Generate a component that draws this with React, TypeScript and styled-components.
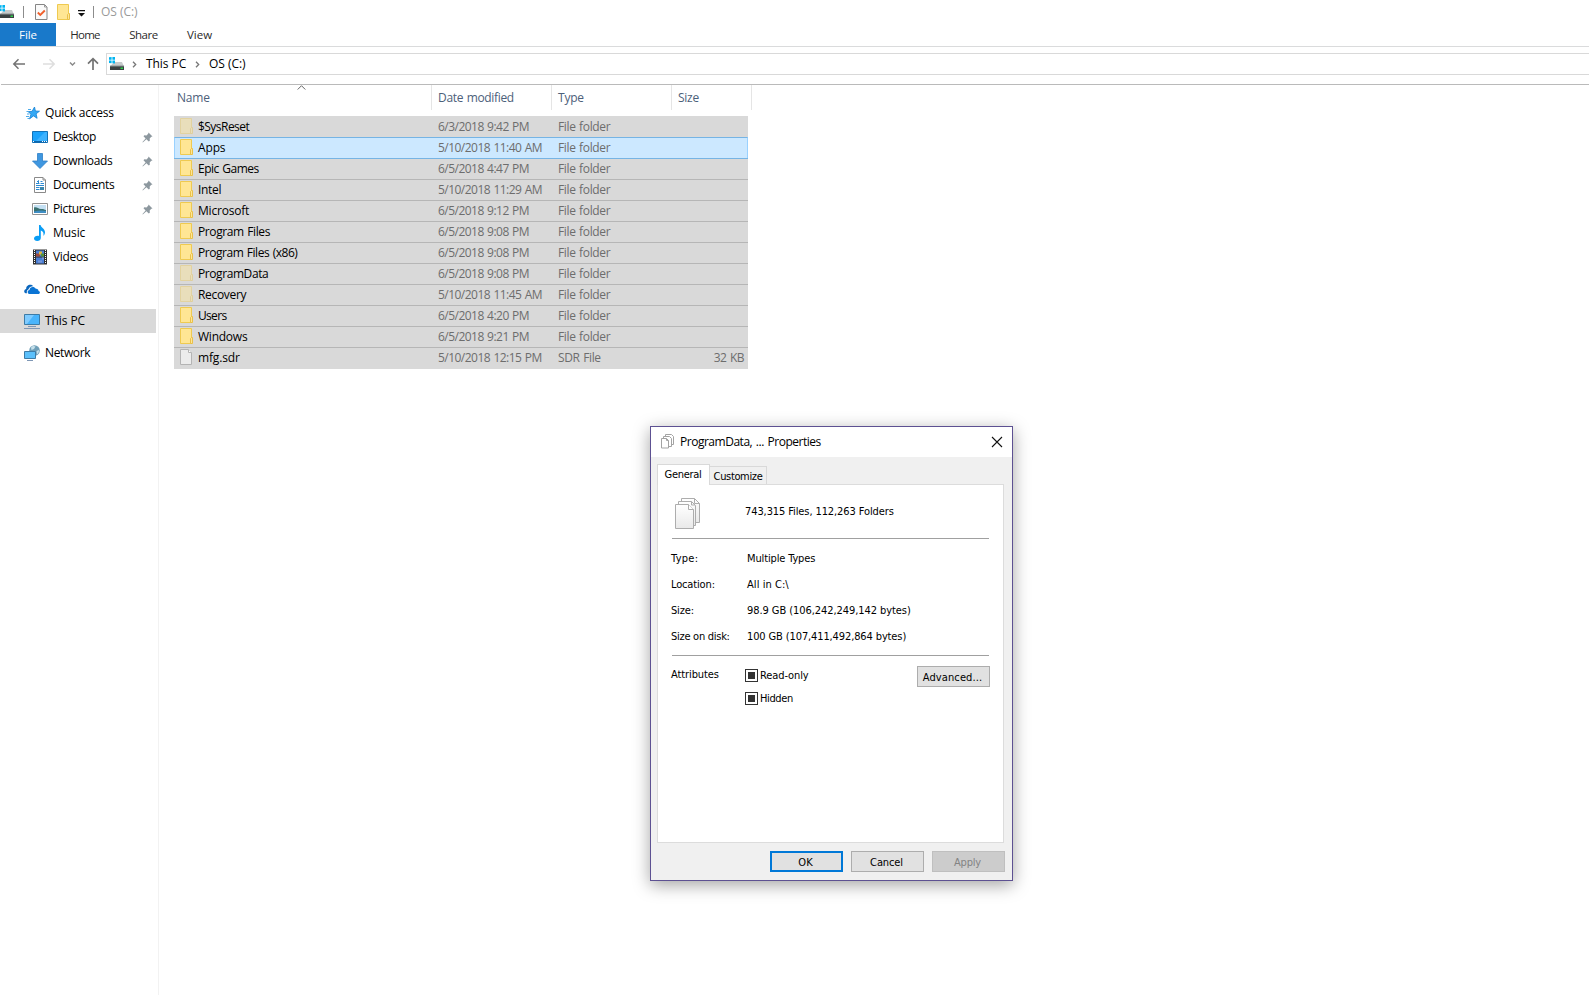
import React from 'react';
import styled, { createGlobalStyle, css } from 'styled-components';

const GlobalStyle = createGlobalStyle`
  * { box-sizing: border-box; }
  body {
    margin: 0;
    background: #fff;
    color: #000;
    font-family: "Open Sans", "Noto Sans", sans-serif;
    font-size: 12px;
    line-height: 16px;
    overflow: hidden;
  }
  svg { display: block; flex: none; }
`;

/* ---------- shared ---------- */

const Label = styled.span<{ $track?: number; $word?: number }>`
  white-space: nowrap;
  letter-spacing: ${(p) => p.$track ?? 0}px;
  word-spacing: ${(p) => p.$word ?? 0}px;
`;

const Window = styled.div`
  width: 1589px;
  height: 995px;
  display: flex;
  flex-direction: column;
  overflow: hidden;
  background: #fff;
`;

/* ---------- title bar and ribbon ---------- */

const TitleBar = styled.header`
  height: 23px;
  display: flex;
  align-items: center;
  color: #999;
`;

const Divider = styled.i`
  width: 1px;
  height: 12px;
  background: #8c8c8c;
`;

const QuickIcons = styled.div`
  display: flex;
  align-items: center;
  width: 101px;
  height: 23px;
  & > ${Divider}:nth-of-type(1) { margin: 0 11px 0 8px; }
  & > ${Divider}:nth-of-type(2) { margin: 0 0 0 8px; }
  & > svg:nth-of-type(3) { margin-left: 9px; }
  & > svg:nth-of-type(4) { margin: 4px 0 0 8px; }
`;

const RibbonTabs = styled.nav`
  height: 24px;
  display: flex;
  border-bottom: 1px solid #dadbdc;
  font-size: 11.5px;
  color: #2b2b2b;
`;

const RibbonTab = styled.div<{ $width: number; $active?: boolean }>`
  width: ${(p) => p.$width}px;
  height: 23px;
  display: flex;
  align-items: center;
  justify-content: center;
  padding-top: 1px;
  ${(p) => p.$active && css`background: #1979ca; color: #fff;`}
`;

const NavBar = styled.div`
  height: 37px;
  display: flex;
  align-items: flex-start;
  padding-top: 6px;
`;

const NavArrows = styled.div`
  width: 106px;
  height: 22px;
  flex: none;
`;

const AddressBox = styled.div`
  flex: 1;
  height: 22px;
  display: flex;
  align-items: center;
  border: 1px solid #d9d9d9;
  border-right: 0;
  padding: 0 0 0 2px;
`;

const Crumb = styled.div<{ $width: number; $indent?: number }>`
  width: ${(p) => p.$width}px;
  padding-left: ${(p) => p.$indent ?? 0}px;
  display: flex;
`;

/* ---------- body ---------- */

const Body = styled.div`
  flex: 1;
  display: flex;
  margin-left: 1px;
  border-top: 1px solid #bababa;
`;

const Sidebar = styled.aside`
  width: 159px;
  flex: none;
  padding-top: 16px;
  margin-left: -1px;
  border-right: 1px solid #f2f2f2;
`;

const SideItem = styled.div<{ $nested?: boolean; $gap?: boolean; $selected?: boolean }>`
  width: 156px;
  height: 24px;
  display: flex;
  align-items: center;
  padding: 0 3px 0 ${(p) => (p.$nested ? 32 : 24)}px;
  margin-top: ${(p) => (p.$gap ? 8 : 0)}px;
  background: ${(p) => (p.$selected ? '#d9d9d9' : 'transparent')};
`;

const SideText = styled(Label)`
  margin-left: 5px;
  flex: 1;
`;

const Listing = styled.main`
  padding-left: 15px;
`;

const HeaderRow = styled.div`
  display: grid;
  grid-template-columns: 258px 120px 120px 80px;
  height: 25px;
  color: #4c607a;
`;

const HeaderCell = styled.div<{ $first?: boolean }>`
  position: relative;
  display: flex;
  align-items: center;
  padding-left: ${(p) => (p.$first ? 3 : 6)}px;
  border-right: 1px solid #e5e5e5;
`;

const SortMark = styled.svg`
  position: absolute;
  left: 123px;
  top: 0;
`;

const Rows = styled.div`
  width: 574px;
  margin-top: 6px;
`;

const Row = styled.div<{ $mode: 'first' | 'plain' | 'hot' | 'afterHot' | 'last' }>`
  display: grid;
  grid-template-columns: 257px 120px 120px 75px;
  align-items: center;
  height: 21px;
  padding-left: 1px;
  background: #d9d9d9;
  color: #6d6d6d;
  border-top: 1px solid #b6b6b6;
  ${(p) => p.$mode === 'first' && css`border-top-color: #d9d9d9;`}
  ${(p) => p.$mode === 'last' && css`height: 22px; padding-bottom: 1px;`}
  ${(p) => p.$mode === 'afterHot' && css`border-top-color: #76b4e4;`}
  ${(p) => p.$mode === 'hot' && css`
    background: #cce8ff;
    border: 1px solid #76b4e4;
    border-bottom: 0;
    border-left-color: #99d1ff;
    border-right-color: #99d1ff;
    padding-left: 0;
  `}
`;

const NameCell = styled.div`
  display: flex;
  align-items: center;
  gap: 5px;
  padding-left: 5px;
  color: #000;
  & > svg { margin-bottom: 2px; }
`;

const Cell = styled.div<{ $end?: boolean }>`
  padding-left: 6px;
  ${(p) => p.$end && css`text-align: right; padding: 0 3px 0 0;`}
`;

/* ---------- properties dialog ---------- */

const Dialog = styled.section`
  position: absolute;
  left: 650px;
  top: 426px;
  width: 363px;
  height: 455px;
  display: flex;
  flex-direction: column;
  background: #f0f0f0;
  border: 1px solid #5d5192;
  box-shadow: 0 4px 16px rgba(0, 0, 0, 0.36);
  font-family: "DejaVu Sans Condensed", "DejaVu Sans", sans-serif;
  font-size: 11px;
`;

const DialogTitle = styled.header`
  height: 30px;
  display: flex;
  align-items: center;
  background: #fff;
  padding: 0 9px 0 10px;
  font-family: "Open Sans", "Noto Sans", sans-serif;
  font-size: 12px;
  & > span { flex: 1; margin-left: 6px; }
  & > svg { margin-bottom: 1px; }
`;

const TabStrip = styled.div`
  display: flex;
  align-items: flex-end;
  height: 27px;
  padding: 0 6px;
`;

const Tab = styled.div<{ $active?: boolean }>`
  display: flex;
  align-items: center;
  justify-content: center;
  border: 1px solid #d9d9d9;
  border-bottom: 0;
  ${(p) => p.$active
    ? css`width: 53px; height: 21px; background: #fff; margin-bottom: -1px; z-index: 1; padding: 0 1px 0 0;`
    : css`width: 57px; height: 18px; background: #f0f0f0; border-left: 0; padding-top: 2px;`}
`;

const Page = styled.div`
  width: 347px;
  height: 359px;
  margin-left: 6px;
  padding: 12px 13px 0 14px;
  background: #fff;
  border: 1px solid #dcdcdc;
`;

const Summary = styled.div`
  height: 41px;
  display: flex;
  & > span { margin: 7px 0 0 43px; }
`;

const Rule = styled.hr`
  margin: 0;
  width: 317px;
  border: 0;
  height: 1px;
  background: #a0a0a0;
`;

const Fields = styled.dl`
  margin: 7px 0 7px;
  display: grid;
  grid-template-columns: 76px 1fr;
  grid-auto-rows: 26px;
  align-items: center;
  height: 102px;
  & > dt, & > dd { margin: 0 0 0 -1px; }
`;

const Attributes = styled.div`
  display: grid;
  grid-template-columns: 73px 1fr 73px;
  padding-top: 10px;
  width: 318px;
`;

const AttributesName = styled.div`
  margin: 1px 0 0 -1px;
`;

const Checks = styled.div`
  display: flex;
  flex-direction: column;
  gap: 10px;
  padding-top: 3px;
`;

const Check = styled.label`
  display: flex;
  align-items: center;
  gap: 2px;
  height: 13px;
`;

const Box = styled.i`
  width: 13px;
  height: 13px;
  border: 1px solid #333;
  padding: 2px;
  background: #333;
  background-clip: content-box;
`;

const Button = styled.button<{ $kind?: 'default' | 'disabled' }>`
  width: 73px;
  height: 21px;
  padding: 2px 2px 0 0;
  display: flex;
  align-items: center;
  justify-content: center;
  font: inherit;
  line-height: 15px;
  color: #000;
  background: #e1e1e1;
  border: 1px solid #adadad;
  ${(p) => p.$kind === 'default' && css`border: 2px solid #0078d7;`}
  ${(p) => p.$kind === 'disabled' && css`background: #ccc; border-color: #bfbfbf; color: #838383;`}
`;

const Actions = styled.footer`
  display: flex;
  justify-content: flex-end;
  gap: 8px;
  padding: 8px 7px 0 0;
`;

/* ---------- icons ---------- */

const DriveIcon = ({ shift = 0 }: { shift?: number }) => (
  <svg width={16 - shift} height="16" viewBox={`${shift} 0 ${16 - shift} 16`}>
    <path d="M5 6h8l2 4.500H1z" fill="#c6cacb" />
    <path d="M0 1.300l2.600-.3v2.700H0zM3.400 1H6v2.700H3.400zM0 4.500h2.600v2.700L0 7zM3.400 4.500H6v3l-2.600-.3z" fill="#00b4f1" />
    <path d="M1 10h14v4H1z" fill="#3b4042" />
    <path d="M1 9.500h14v1H1z" fill="#899093" />
    <path d="M11.500 11.500H14v1.500h-2.500z" fill="#2fd04a" />
  </svg>
);

const CheckPageIcon = () => (
  <svg width="13" height="16" viewBox="0 0 13 16">
    <path d="M.5.500h9l2.500 2.500v12.500H.500z" fill="#fafafa" stroke="#858585" />
    <path d="M9.500.500V3H12" fill="none" stroke="#999" />
    <path d="M2.800 8.500l2.500 2.500 4.500-4.500" fill="none" stroke="#f0602c" strokeWidth="1.900" />
  </svg>
);

const FolderIcon = ({ faded }: { faded?: boolean }) => (
  <svg width="13" height="16" viewBox="0 0 13 16" opacity={faded ? 0.42 : 1}>
    <path d="M.5.500h11v15H.500z" fill="#ffe694" stroke="#efca50" />
    <path d="M10.500 15.500v-5l1-1h1v6z" fill="#ffe694" stroke="#e9c04a" />
  </svg>
);

const FileIcon = () => (
  <svg width="13" height="16" viewBox="0 0 13 16">
    <path d="M.5.500h8l3 3v12H.500z" fill="#ececec" stroke="#b4b4b4" />
    <path d="M8.500.500v3h3" fill="#fff" stroke="#b4b4b4" />
  </svg>
);

const MenuMark = () => (
  <svg width="7" height="8" viewBox="0 0 7 8">
    <path d="M0 0h7v1.300H0zM0 3h7L3.500 6.500z" fill="#111" />
  </svg>
);

const Chevron = () => (
  <svg width="5" height="7" viewBox="0 0 5 7">
    <path d="M1 .7l2.700 2.800L1 6.300" fill="none" stroke="#777" strokeWidth="1.300" />
  </svg>
);

const ArrowsIcon = () => (
  <svg width="106" height="22" viewBox="0 0 106 22" fill="none">
    <path d="M14 11h11M18.500 6.300L13.800 11l4.700 4.700" stroke="#737373" strokeWidth="1.500" />
    <path d="M43 11h11M49.500 6.300l4.700 4.700-4.700 4.700" stroke="#dedede" strokeWidth="1.500" />
    <path d="M70 9.500l2.500 2.500L75 9.500" stroke="#888" strokeWidth="1.400" />
    <path d="M93 17V6M88 10.700l5-5 5 5" stroke="#737373" strokeWidth="1.700" />
  </svg>
);

const PinIcon = () => (
  <svg width="11" height="11" viewBox="0 0 11 11">
    <path d="M6.500.5l4 4-1.200.3-1.600 1.800.1 2.200-1 .7-2.400-2.200L.8 10.500l-.3-.4L3.600 6.500 1.500 4.200l.8-.9 2.200.1L6.200 1.800z" fill="#8d989f" />
  </svg>
);

const StarIcon = () => (
  <svg width="16" height="16" viewBox="0 0 16 16">
    <path d="M10.500 2l.9 4 4.100.2-3.400 2.600 1 4.500-3.600-2.400-4 3 1.500-4.800-2.800-2.400 3.900-.4z" fill="#34a8f4" stroke="#1482d4" strokeWidth=".8" />
    <path d="M4 4.500h3M2.500 6.500h2M3 9h2.500M2 11.500h3M3.500 13.500h1.500" stroke="#4cabea" strokeWidth="1" />
  </svg>
);

const DesktopIcon = () => (
  <svg width="16" height="16" viewBox="0 0 16 16">
    <path d="M.5 2.500h15v11H.500z" fill="#1aa2fb" stroke="#1272b8" />
    <path d="M4 12L13 3h2v9z" fill="#3cb2ff" />
    <path d="M1 12h14v1.500H1z" fill="#0c66ad" />
    <path d="M1 12.500h1m8 0h1m1 0h1m1 0h1" stroke="#fff" />
  </svg>
);

const DownloadIcon = () => (
  <svg width="16" height="16" viewBox="0 0 16 16">
    <path d="M5.500.5h5v7.500h5L8 15.500.500 8h5z" fill="#3f97e0" stroke="#2f7fc6" strokeWidth=".8" />
  </svg>
);

const DocumentIcon = () => (
  <svg width="16" height="16" viewBox="0 0 16 16">
    <path d="M2.500.500h8.500l2.500 2.500v12.500h-11z" fill="#fff" stroke="#8a8a8a" />
    <path d="M11 .500V3h2.500" fill="none" stroke="#8a8a8a" />
    <path d="M4 6.500h3.500M5 5l1.500-1.500v3M8.500 4.500h2M8.500 6.500h3.500M4 8.500h8M4 10.500h3.500M4 12.500h3.500" fill="none" stroke="#2c8ad2" />
    <path d="M8 10h4v3H8z" fill="#3b86ad" />
  </svg>
);

const PictureIcon = () => (
  <svg width="16" height="16" viewBox="0 0 16 16">
    <path d="M.5 2.500h15v11H.500z" fill="#fff" stroke="#929292" />
    <path d="M2 4h12v8H2z" fill="#c4e0f3" />
    <path d="M2 6.500c3-1 4 1.500 7 1.500s3 .5 5 1v3H2z" fill="#39706f" />
    <path d="M2 10.500c4-1 8-1.500 12-.5V12H2z" fill="#3f8ec4" />
  </svg>
);

const MusicIcon = () => (
  <svg width="16" height="16" viewBox="0 0 16 16">
    <path d="M7 0h1.600c.3 2.600 4.400 3.600 4.400 7.200 0 1.600-.7 2.800-1.600 3.600.6-2.700-.4-4.500-2.600-5.200V13c0 1.700-1.500 3-3.600 3C3.300 16 2 15 2 13.600 2 12 3.600 10.800 5.600 10.800c.5 0 1 .1 1.400.2z" fill="#0a9df5" />
  </svg>
);

const VideoIcon = () => (
  <svg width="16" height="16" viewBox="0 0 16 16">
    <path d="M1 .5h14v15H1z" fill="#303030" />
    <path d="M4 1.500h8v6H4zM4 8.500h8v6H4z" fill="#4a7fd6" />
    <path d="M4 4.500h4v3H4z" fill="#a04a3c" />
    <path d="M7 2.500h3v3H7z" fill="#e2b63a" />
    <path d="M9 4.500h3v3H9z" fill="#55933e" />
    <path d="M6 11.500h4v2H6zM10 8.500h2v2h-2z" fill="#7897d8" />
    <path d="M2.500 1v14M13.500 1v14" stroke="#fff" strokeDasharray="1 1" />
  </svg>
);

const CloudIcon = () => (
  <svg width="16" height="16" viewBox="0 0 16 16">
    <path d="M.2 10.500c0-1.500 1-2.300 2-2.500C2 5.500 4 3.700 6.200 3.700c1.500 0 2.500.7 3.200 1.500-2.400-.2-4.400 1-5 3.300-1.400.5-2 2-1.400 3.800C1.300 12.500.2 11.800.2 10.500z" fill="#0a66bd" />
    <path d="M6 13c-3 0-3-3.800-.5-4 0-3.300 4.700-4.300 6.300-1.300 1.700-.3 2.700.8 2.700 2.200 2 .3 1.800 3.100-.3 3.100z" fill="#0a74d4" />
  </svg>
);

const ComputerIcon = () => (
  <svg width="16" height="16" viewBox="0 0 16 16">
    <path d="M.5 1.500h15v10H.500z" fill="#49b4fb" stroke="#3d7ba6" />
    <path d="M1 2h9L3 11H1z" fill="#7fcbff" />
    <path d="M4 13.500h8M0 15.500h16" stroke="#7f97b5" />
  </svg>
);

const NetworkIcon = () => (
  <svg width="16" height="16" viewBox="0 0 16 16">
    <circle cx="10.500" cy="5.500" r="5.300" fill="#6f9fb8" />
    <path d="M7 2.500c1.500-2 3.500-1.800 4.500-1L10 4 7.500 5zM12.500 6l2.500-1c.3 2-1 3.500-2 4.500z" fill="#c5dfea" />
    <path d="M.5 6.500h11v7H.500z" fill="#5bc0fb" stroke="#3d7ba6" />
    <path d="M3 15.500h6" stroke="#7f97b5" />
  </svg>
);

const PagesSmallIcon = () => (
  <svg width="13" height="15" viewBox="0 0 13 15" fill="#fff" stroke="#a3a3a3">
    <path d="M4.500.5h6l2 2v8h-8z" />
    <path d="M2.500 2.500h6l2 2v8h-8z" />
    <path d="M.5 4.500h5l2 2v7.500h-7z" />
    <path d="M5.500 4.500v2h2" fill="none" />
  </svg>
);

const PagesIcon = () => (
  <svg width="30" height="34" viewBox="0 0 30 34">
    <defs>
      <linearGradient id="sheet" x1="0" y1="0" x2="0" y2="1">
        <stop offset="0" stopColor="#fff" />
        <stop offset="1" stopColor="#e9e9e9" />
      </linearGradient>
    </defs>
    <g fill="url(#sheet)" stroke="#adadad">
      <path d="M9.500 1.500h13l5 5v19h-18z" />
      <path d="M6.500 4.500h13l4 4v20h-17z" />
      <path d="M3.500 7.500h13l5 5v19h-18z" />
      <path d="M16.500 7.500v5h5" fill="#fff" />
      <path d="M19.500 4.500v3.500h3.500M22.500 1.500v5h5" fill="none" />
    </g>
  </svg>
);

const CloseIcon = () => (
  <svg width="12" height="12" viewBox="0 0 12 12">
    <path d="M1 1l10 10M11 1L1 11" stroke="#111" strokeWidth="1.100" />
  </svg>
);

/* ---------- data ---------- */

const sideItems = [
  { text: 'Quick access', track: -0.2, icon: <StarIcon /> },
  { text: 'Desktop', track: -0.48, icon: <DesktopIcon />, nested: true, pinned: true },
  { text: 'Downloads', track: -0.36, icon: <DownloadIcon />, nested: true, pinned: true },
  { text: 'Documents', track: -0.32, icon: <DocumentIcon />, nested: true, pinned: true },
  { text: 'Pictures', track: -0.36, icon: <PictureIcon />, nested: true, pinned: true },
  { text: 'Music', track: -0.08, icon: <MusicIcon />, nested: true },
  { text: 'Videos', track: -0.34, icon: <VideoIcon />, nested: true },
  { text: 'OneDrive', track: -0.42, icon: <CloudIcon />, gap: true },
  { text: 'This PC', track: -0.08, icon: <ComputerIcon />, gap: true, selected: true },
  { text: 'Network', track: -0.38, icon: <NetworkIcon />, gap: true },
];

const files: { name: string; track: number; date: string; faded?: boolean; kind?: string; size?: string }[] = [
  { name: '$SysReset', track: -0.54, date: '6/3/2018 9:42 PM', faded: true },
  { name: 'Apps', track: -0.14, date: '5/10/2018 11:40 AM' },
  { name: 'Epic Games', track: -0.48, date: '6/5/2018 4:47 PM' },
  { name: 'Intel', track: -0.3, date: '5/10/2018 11:29 AM' },
  { name: 'Microsoft', track: -0.2, date: '6/5/2018 9:12 PM' },
  { name: 'Program Files', track: -0.4, date: '6/5/2018 9:08 PM' },
  { name: 'Program Files (x86)', track: -0.46, date: '6/5/2018 9:08 PM' },
  { name: 'ProgramData', track: -0.42, date: '6/5/2018 9:08 PM', faded: true },
  { name: 'Recovery', track: -0.32, date: '5/10/2018 11:45 AM', faded: true },
  { name: 'Users', track: -0.68, date: '6/5/2018 4:20 PM' },
  { name: 'Windows', track: -0.24, date: '6/5/2018 9:21 PM' },
  { name: 'mfg.sdr', track: -0.14, date: '5/10/2018 12:15 PM', kind: 'SDR File', size: '32 KB' },
];

const rowMode = (i: number) => {
  if (i === 0) return 'first';
  if (i === 1) return 'hot';
  if (i === 2) return 'afterHot';
  return i === files.length - 1 ? 'last' : 'plain';
};

const fields: [string, number, string, number][] = [
  ['Type:', 0.3, 'Multiple Types', -0.14],
  ['Location:', -0.15, 'All in C:\\', 0.06],
  ['Size:', -0.16, '98.9 GB (106,242,249,142 bytes)', -0.07],
  ['Size on disk:', -0.27, '100 GB (107,411,492,864 bytes)', -0.12],
];

export default function App() {
  return (
    <Window>
      <GlobalStyle />
      <TitleBar>
        <QuickIcons>
          <DriveIcon shift={1} />
          <Divider />
          <CheckPageIcon />
          <FolderIcon />
          <MenuMark />
          <Divider />
        </QuickIcons>
        <Label $track={-0.03}>OS (C:)</Label>
      </TitleBar>
      <RibbonTabs>
        <RibbonTab $width={56} $active><Label $track={-0.1}>File</Label></RibbonTab>
        <RibbonTab $width={58}><Label $track={-0.7}>Home</Label></RibbonTab>
        <RibbonTab $width={59}><Label $track={-0.45}>Share</Label></RibbonTab>
        <RibbonTab $width={53}><Label>View</Label></RibbonTab>
      </RibbonTabs>
      <NavBar>
        <NavArrows><ArrowsIcon /></NavArrows>
        <AddressBox>
          <DriveIcon />
          <Crumb $width={21} $indent={7}><Chevron /></Crumb>
          <Crumb $width={48}><Label $track={-0.06}>This PC</Label></Crumb>
          <Crumb $width={15} $indent={1}><Chevron /></Crumb>
          <Label $track={-0.03}>OS (C:)</Label>
        </AddressBox>
      </NavBar>
      <Body>
        <Sidebar>
          {sideItems.map((item) => (
            <SideItem key={item.text} $nested={item.nested} $gap={item.gap} $selected={item.selected}>
              {item.icon}
              <SideText $track={item.track}>{item.text}</SideText>
              {item.pinned && <PinIcon />}
            </SideItem>
          ))}
        </Sidebar>
        <Listing>
          <HeaderRow>
            <HeaderCell $first>
              <Label $track={-0.22}>Name</Label>
              <SortMark width="9" height="5" viewBox="0 0 9 5">
                <path d="M.7 4.500l3.800-3.800 3.800 3.800" fill="none" stroke="#666" />
              </SortMark>
            </HeaderCell>
            <HeaderCell><Label $track={-0.33} $word={0.8}>Date modified</Label></HeaderCell>
            <HeaderCell><Label $track={-0.2}>Type</Label></HeaderCell>
            <HeaderCell><Label $track={-0.28}>Size</Label></HeaderCell>
          </HeaderRow>
          <Rows>
            {files.map((f, i) => (
              <Row key={f.name} $mode={rowMode(i)}>
                <NameCell>
                  {f.kind ? <FileIcon /> : <FolderIcon faded={f.faded} />}
                  <Label $track={f.track} $word={0.8}>{f.name}</Label>
                </NameCell>
                <Cell><Label $track={-0.53} $word={0.8}>{f.date}</Label></Cell>
                <Cell><Label $track={-0.36} $word={0.8}>{f.kind ?? 'File folder'}</Label></Cell>
                <Cell $end><Label $track={-0.5} $word={0.8}>{f.size}</Label></Cell>
              </Row>
            ))}
          </Rows>
        </Listing>
      </Body>

      <Dialog>
        <DialogTitle>
          <PagesSmallIcon />
          <Label $track={-0.48} $word={1}>ProgramData, ... Properties</Label>
          <CloseIcon />
        </DialogTitle>
        <TabStrip>
          <Tab $active><Label $track={-0.3}>General</Label></Tab>
          <Tab><Label $track={-0.35}>Customize</Label></Tab>
        </TabStrip>
        <Page>
          <Summary>
            <PagesIcon />
            <Label $track={-0.1}>743,315 Files, 112,263 Folders</Label>
          </Summary>
          <Rule />
          <Fields>
            {fields.map(([name, nameTrack, value, valueTrack]) => (
              <React.Fragment key={name}>
                <dt><Label $track={nameTrack}>{name}</Label></dt>
                <dd><Label $track={valueTrack}>{value}</Label></dd>
              </React.Fragment>
            ))}
          </Fields>
          <Rule />
          <Attributes>
            <AttributesName><Label $track={-0.1}>Attributes</Label></AttributesName>
            <Checks>
              <Check><Box /><Label $track={-0.1}>Read-only</Label></Check>
              <Check><Box /><Label $track={-0.38}>Hidden</Label></Check>
            </Checks>
            <Button><Label $track={0.12}>Advanced...</Label></Button>
          </Attributes>
        </Page>
        <Actions>
          <Button $kind="default"><Label $track={0.2}>OK</Label></Button>
          <Button><Label $track={-0.12}>Cancel</Label></Button>
          <Button $kind="disabled" disabled><Label $track={-0.2}>Apply</Label></Button>
        </Actions>
      </Dialog>
    </Window>
  );
}
